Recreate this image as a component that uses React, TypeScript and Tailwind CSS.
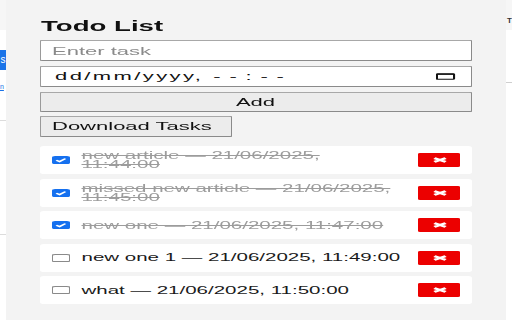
import React from "react";

type Task = { text: string; done: boolean };

const tasks: Task[] = [
  { text: "new article — 21/06/2025, 11:44:00", done: true },
  { text: "missed new article — 21/06/2025, 11:45:00", done: true },
  { text: "new one — 21/06/2025, 11:47:00", done: true },
  { text: "new one 1 — 21/06/2025, 11:49:00", done: false },
  { text: "what — 21/06/2025, 11:50:00", done: false },
];

// the popup is captured stretched sideways, so everything inside is laid out
// at half width and scaled back up; half-pixel side shadows stay 1px wide
const field =
  "shadow-[inset_0.5px_0_0_#9a9a9a,inset_-0.5px_0_0_#8a8a8a,inset_0_1px_0_#a8a8a8,inset_0_-1px_0_#8a8a8a]";

function Checkbox({ checked }: { checked: boolean }) {
  if (checked) {
    return (
      <span className="flex h-[8px] w-[8.75px] shrink-0 items-center justify-center rounded-[1.5px] bg-[#1570ef]">
        <svg viewBox="0 0 9 8" className="h-[8px] w-[8.75px]">
          <path d="M2.2 4.3 L3.9 5.6 L6.9 2.6" fill="none" stroke="#fff" strokeWidth="1.3" />
        </svg>
      </span>
    );
  }
  return (
    <span className="h-[8px] w-[8.75px] shrink-0 rounded-[1.5px] bg-white shadow-[inset_0.5px_0_0_#8a8a8a,inset_-0.5px_0_0_#8a8a8a,inset_0_1px_0_#8a8a8a,inset_0_-1px_0_#8a8a8a]" />
  );
}

function TaskRow({ task }: { task: Task }) {
  return (
    <li className="flex h-[28px] items-center rounded-[2px] bg-white pl-[6px] pr-[5.5px]">
      <Checkbox checked={task.done} />
      <span
        className={`ml-[6px] w-[161px] text-[10.25px] leading-[9px] ${
          task.done ? "text-[#9c9c9c] line-through" : "text-[#1a1a1a]"
        }`}
      >
        {task.text}
      </span>
      {/* Delete */}
      <button className="ml-auto flex h-[14px] w-[21px] items-center justify-center rounded-[1px] bg-[#ec0000]">
        <svg viewBox="0 0 8 6" className="h-[6px] w-[8px]">
          <path d="M1.2 1.2 L6.8 4.8 M6.8 1.2 L1.2 4.8" stroke="#fff" strokeWidth="2" />
        </svg>
      </button>
    </li>
  );
}

export default function App() {
  return (
    <div className="flex h-[320px] w-[512px] overflow-hidden bg-white font-['Liberation_Sans',Arial,sans-serif]">
      {/* Page behind, left edge */}
      <div className="flex w-[6px] shrink-0 flex-col">
        <div className="h-[30px] bg-[#f6f6f6]" />
        <div className="mt-[20px] flex h-[20px] justify-end overflow-hidden bg-[#1a73e8] pr-[0.5px] text-[10px] leading-[20px] text-white">
          s
        </div>
        <div className="mt-[13px] h-[8px] text-[7px] leading-[8px] text-[#1a73e8] underline">
          n
        </div>
        <div className="mt-[29px] border-t border-[#dcdcdc]" />
        <div className="mt-[113px] border-t border-[#dcdcdc]" />
      </div>

      {/* Popup */}
      <main className="w-[500px] shrink-0 overflow-hidden bg-[#f3f3f3]">
        <div className="w-[250px] origin-top-left scale-x-[2] pl-[17px] pt-[19px]">
          <div className="flex w-[215.5px] flex-col">
            <h1 className="pl-[0.5px] text-[13.8px] font-bold leading-[15px] text-[#111]">Todo List</h1>

            <input
              type="text"
              placeholder="Enter task"
              className={`mt-[6px] h-[21px] rounded-[1px] bg-white pl-[6px] text-[11px] text-[#111] outline-none placeholder:text-[#8a8a8a] ${field}`}
            />

            <div
              className={`mt-[5px] flex h-[21px] items-center rounded-[1px] bg-white pl-[7.5px] pr-[8px] text-[11px] text-[#111] ${field}`}
            >
              <span className="tracking-[1.2px]">dd/mm/yyyy,</span>
              <span className="ml-[5px] tracking-[4.4px]">--:--</span>
              <svg viewBox="0 0 10 7" className="ml-auto h-[7px] w-[9.5px]">
                <rect x="0.5" y="0.6" width="9" height="5.8" rx="0.5" fill="none" stroke="#111" strokeWidth="1.1" />
                <rect x="0.5" y="0.6" width="9" height="1.2" fill="#111" />
              </svg>
            </div>

            <button
              className={`mt-[5px] h-[20px] rounded-[1px] bg-[#ececec] text-[11px] text-[#111] ${field}`}
            >
              Add
            </button>

            <button
              className={`mt-[4px] h-[21px] w-[95.5px] rounded-[1px] bg-[#ececec] px-[6px] text-left text-[11px] text-[#111] ${field}`}
            >
              Download Tasks
            </button>

            <ul className="mt-[9px] flex flex-col gap-[4.5px]">
              {tasks.map((t) => (
                <TaskRow key={t.text} task={t} />
              ))}
            </ul>
          </div>
        </div>
      </main>

      {/* Page behind, right edge */}
      <div className="flex flex-1 flex-col">
        <div className="h-[30px] bg-[#f6f6f6] pl-[1px] pt-[17px] text-[8px] font-bold leading-[8px] text-[#333]">
          T
        </div>
        <div className="mt-[52px] border-t border-[#cfcfcf]" />
      </div>
    </div>
  );
}
